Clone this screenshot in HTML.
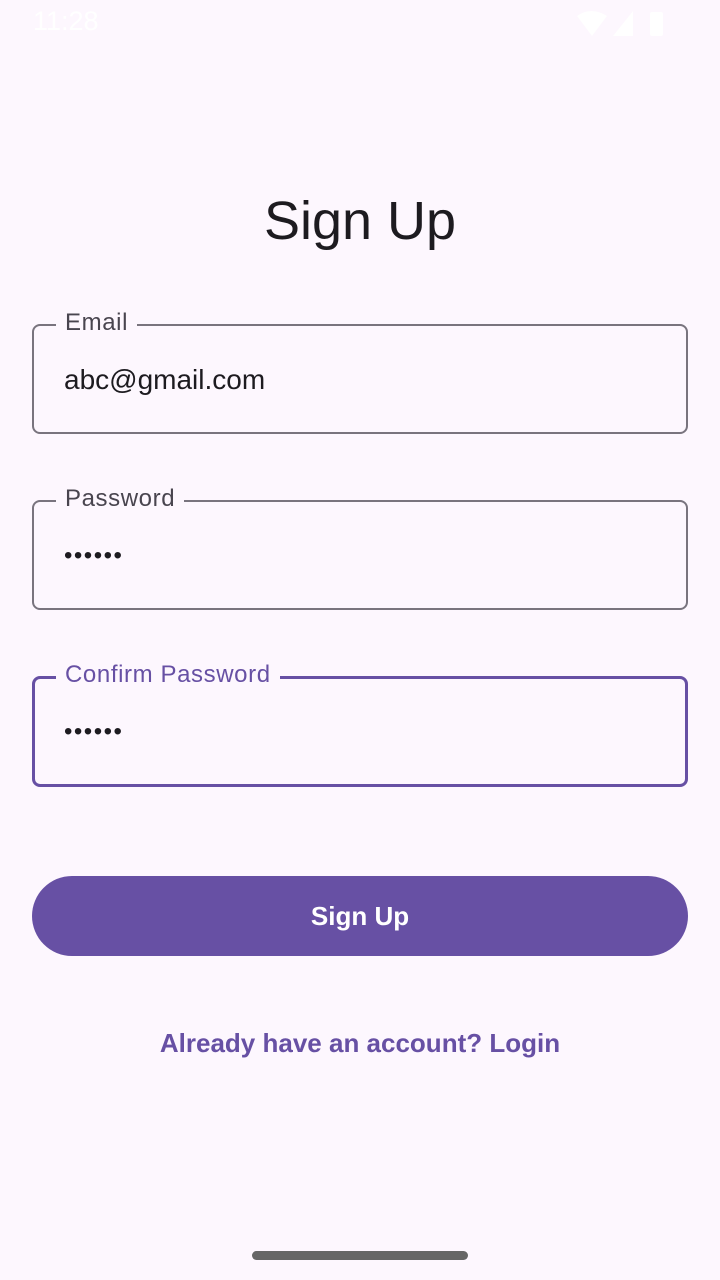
<!DOCTYPE html>
<html><head><meta charset="utf-8"><style>
body{margin:0;width:720px;height:1280px;background:#fdf7fe;font-family:"Liberation Sans",sans-serif;position:relative;overflow:hidden;color:#1d1b20}
.abs{position:absolute}
.field{position:absolute;left:32px;width:656px;height:110px;box-sizing:border-box;border:2px solid #79747e;border-radius:8px}
.lab{position:absolute;top:-17px;left:22px;padding:0 9px;background:#fdf7fe;font-size:24px;color:#49454f;letter-spacing:0.6px}
.val{position:absolute;left:30px;top:38px;font-size:28px}
.dots{position:absolute;left:30px;top:40px;font-size:24px;letter-spacing:1.5px}
</style></head><body>
<div class="abs" style="left:33px;top:6px;font-size:27px;color:#fff">11:28</div>
<svg class="abs" style="left:575px;top:10px" width="100" height="28"><path d="M2 6 Q16 -4 32 6 L17 26Z" fill="#fff"/><path d="M38 26 L58 1 L58 26Z" fill="#fff"/><rect x="75" y="2" width="13" height="24" rx="2" fill="#fff"/></svg>
<div class="abs" style="left:0;width:720px;top:190px;text-align:center;font-size:54px">Sign Up</div>
<div class="field" style="top:324px"><div class="lab">Email</div><div class="val">abc@gmail.com</div></div>
<div class="field" style="top:500px"><div class="lab">Password</div><div class="dots">••••••</div></div>
<div class="field" style="top:676px;border:3px solid #6750a4;height:111px"><div class="lab" style="color:#6750a4;top:-18px;left:21px">Confirm Password</div><div class="dots" style="left:29px;top:39px">••••••</div></div>
<div class="abs" style="left:32px;top:876px;width:656px;height:80px;border-radius:40px;background:#6750a4;color:#fff;font-size:26px;font-weight:bold;text-align:center;line-height:80px">Sign Up</div>
<div class="abs" style="left:0;width:720px;top:1028px;text-align:center;font-size:26px;color:#6750a4;font-weight:bold">Already have an account? Login</div>
<div class="abs" style="left:252px;top:1251px;width:216px;height:9px;border-radius:5px;background:#666"></div>
</body></html>
